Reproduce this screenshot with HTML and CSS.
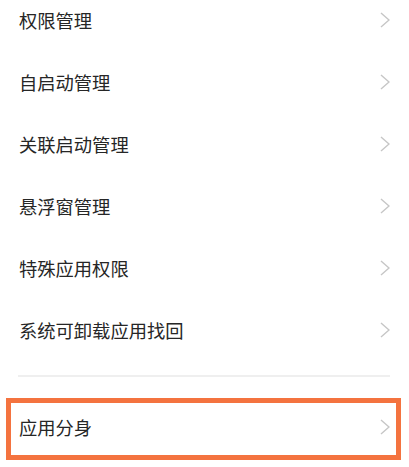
FILE: index.html
```html
<!DOCTYPE html>
<html lang="zh">
<head>
<meta charset="utf-8">
<link rel="stylesheet" href="styles.css">
</head>
<body>
<div class="page">
  <ul class="list">
    <li class="row"><span class="label">权限管理</span><svg class="chev" viewBox="0 0 10 16"><path d="M1 1 L9 8 L1 15"/></svg></li>
    <li class="row"><span class="label">自启动管理</span><svg class="chev" viewBox="0 0 10 16"><path d="M1 1 L9 8 L1 15"/></svg></li>
    <li class="row"><span class="label">关联启动管理</span><svg class="chev" viewBox="0 0 10 16"><path d="M1 1 L9 8 L1 15"/></svg></li>
    <li class="row"><span class="label">悬浮窗管理</span><svg class="chev" viewBox="0 0 10 16"><path d="M1 1 L9 8 L1 15"/></svg></li>
    <li class="row"><span class="label">特殊应用权限</span><svg class="chev" viewBox="0 0 10 16"><path d="M1 1 L9 8 L1 15"/></svg></li>
    <li class="row"><span class="label">系统可卸载应用找回</span><svg class="chev" viewBox="0 0 10 16"><path d="M1 1 L9 8 L1 15"/></svg></li>
  </ul>
  <div class="divider"></div>
  <div class="highlight">
    <span class="label">应用分身</span><svg class="chev" viewBox="0 0 10 16"><path d="M1 1 L9 8 L1 15"/></svg>
  </div>
</div>
</body>
</html>
```
FILE: styles.css
```css
html, body {
  margin: 0;
  padding: 0;
  background: #ffffff;
}
body {
  width: 409px;
  height: 467px;
  overflow: hidden;
  font-family: "Noto Sans CJK SC", "Noto Sans", sans-serif;
}
.page {
  display: flex;
  flex-direction: column;
}
.list {
  list-style: none;
  margin: -11px 0 0 0;
  padding: 0;
}
.row {
  height: 62px;
  display: flex;
  align-items: center;
  justify-content: space-between;
  padding: 0 19px 0 19px;
}
.label {
  font-size: 18.3px;
  color: #262626;
  line-height: 1;
}
.chev {
  width: 10px;
  height: 16px;
  flex: none;
}
.chev path {
  fill: none;
  stroke: #c6c6c6;
  stroke-width: 1.4;
}
.divider {
  height: 2px;
  background: #efefef;
  margin: 14px 19px 0 18px;
}
.highlight {
  margin: 21px 8px 0 6px;
  height: 52px;
  border: 5px solid #f4733f;
  display: flex;
  align-items: center;
  justify-content: space-between;
  padding: 0 6px 0 8px;
}
.highlight .chev {
  margin-top: -4px;
}
.highlight .label {
  margin-top: -4px;
}
```
